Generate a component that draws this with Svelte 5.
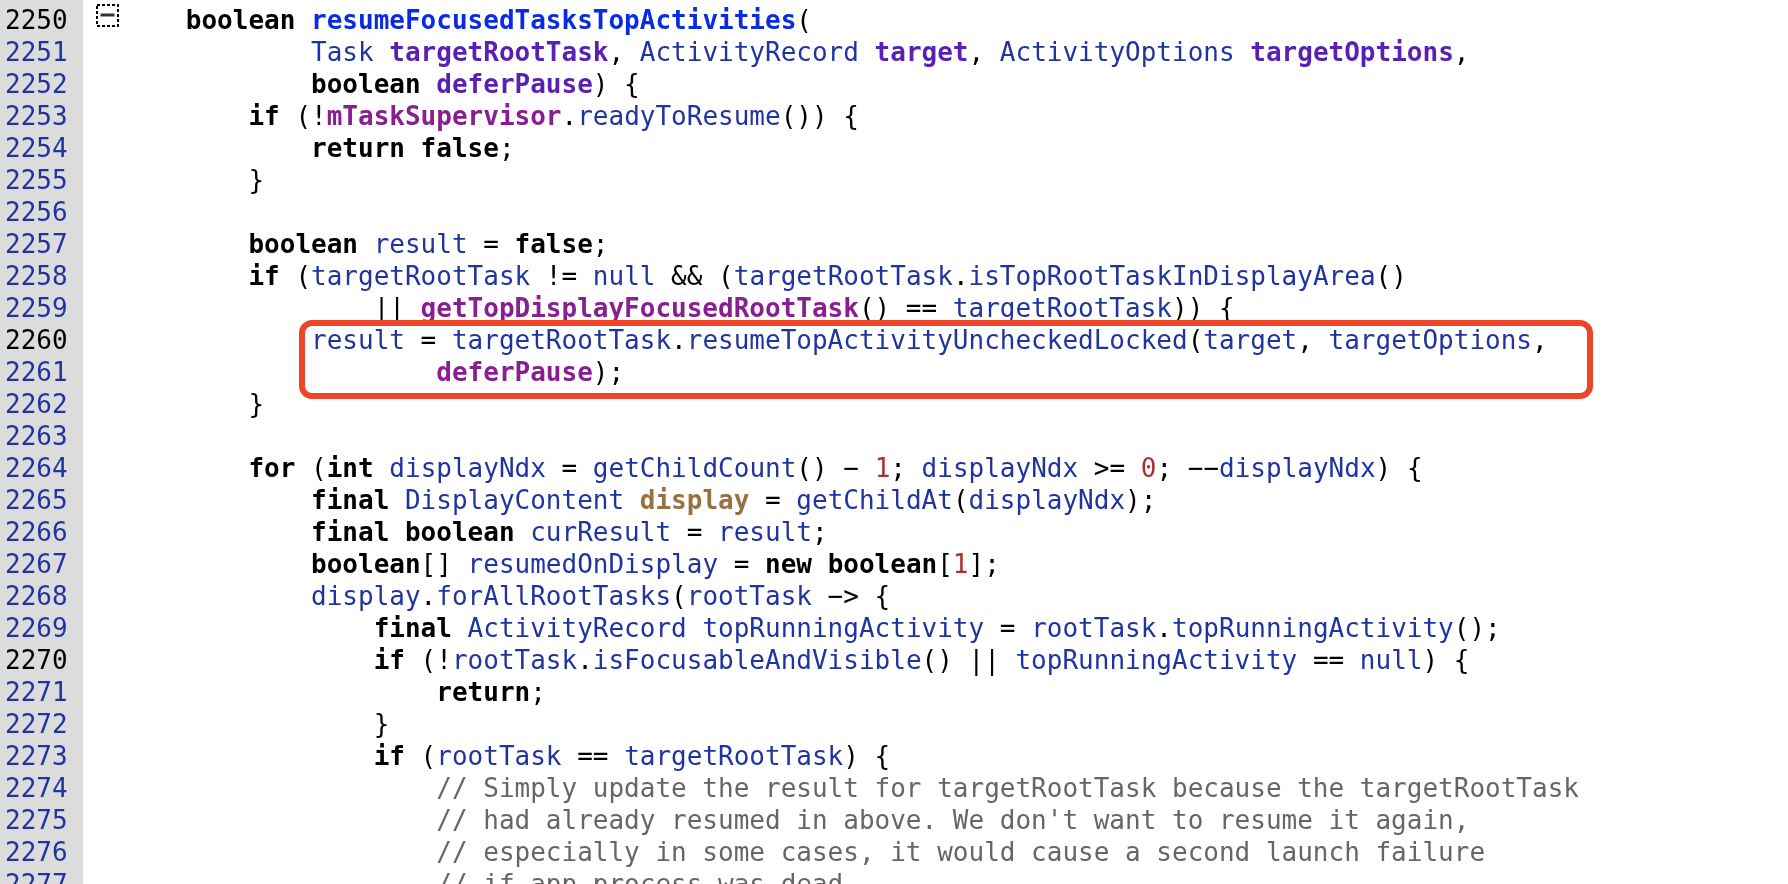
<script lang="ts">
  // each line: line number, indent in chars, then [class, text] pairs
  type Tok = [string, string];
  const k = (t: string): Tok => ['kw', t];
  const v = (t: string): Tok => ['id', t];
  const p = (t: string): Tok => ['', t];
  const a = (t: string): Tok => ['param', t];
  const f = (t: string): Tok => ['field', t];
  const n = (t: string): Tok => ['num', t];
  const c = (t: string): Tok => ['comment', t];

  const lines: { no: number; ind: number; toks: Tok[] }[] = [
    { no: 2250, ind: 4, toks: [k('boolean'), p(' '), ['method', 'resumeFocusedTasksTopActivities'], p('(')] },
    { no: 2251, ind: 12, toks: [v('Task'), p(' '), a('targetRootTask'), p(', '), v('ActivityRecord'), p(' '), a('target'), p(', '), v('ActivityOptions'), p(' '), a('targetOptions'), p(',')] },
    { no: 2252, ind: 12, toks: [k('boolean'), p(' '), a('deferPause'), p(') {')] },
    { no: 2253, ind: 8, toks: [k('if'), p(' (!'), f('mTaskSupervisor'), p('.'), v('readyToResume'), p('()) {')] },
    { no: 2254, ind: 12, toks: [k('return'), p(' '), k('false'), p(';')] },
    { no: 2255, ind: 8, toks: [p('}')] },
    { no: 2256, ind: 0, toks: [] },
    { no: 2257, ind: 8, toks: [k('boolean'), p(' '), v('result'), p(' = '), k('false'), p(';')] },
    { no: 2258, ind: 8, toks: [k('if'), p(' ('), v('targetRootTask'), p(' != '), v('null'), p(' && ('), v('targetRootTask'), p('.'), v('isTopRootTaskInDisplayArea'), p('()')] },
    { no: 2259, ind: 16, toks: [p('|| '), f('getTopDisplayFocusedRootTask'), p('() == '), v('targetRootTask'), p(')) {')] },
    { no: 2260, ind: 12, toks: [v('result'), p(' = '), v('targetRootTask'), p('.'), v('resumeTopActivityUncheckedLocked'), p('('), v('target'), p(', '), v('targetOptions'), p(',')] },
    { no: 2261, ind: 20, toks: [f('deferPause'), p(');')] },
    { no: 2262, ind: 8, toks: [p('}')] },
    { no: 2263, ind: 0, toks: [] },
    { no: 2264, ind: 8, toks: [k('for'), p(' ('), k('int'), p(' '), v('displayNdx'), p(' = '), v('getChildCount'), p('() − '), n('1'), p('; '), v('displayNdx'), p(' >= '), n('0'), p('; −−'), v('displayNdx'), p(') {')] },
    { no: 2265, ind: 12, toks: [k('final'), p(' '), v('DisplayContent'), p(' '), ['local', 'display'], p(' = '), v('getChildAt'), p('('), v('displayNdx'), p(');')] },
    { no: 2266, ind: 12, toks: [k('final'), p(' '), k('boolean'), p(' '), v('curResult'), p(' = '), v('result'), p(';')] },
    { no: 2267, ind: 12, toks: [k('boolean'), p('[] '), v('resumedOnDisplay'), p(' = '), k('new'), p(' '), k('boolean'), p('['), n('1'), p('];')] },
    { no: 2268, ind: 12, toks: [v('display'), p('.'), v('forAllRootTasks'), p('('), v('rootTask'), p(' −> {')] },
    { no: 2269, ind: 16, toks: [k('final'), p(' '), v('ActivityRecord'), p(' '), v('topRunningActivity'), p(' = '), v('rootTask'), p('.'), v('topRunningActivity'), p('();')] },
    { no: 2270, ind: 16, toks: [k('if'), p(' (!'), v('rootTask'), p('.'), v('isFocusableAndVisible'), p('() || '), v('topRunningActivity'), p(' == '), v('null'), p(') {')] },
    { no: 2271, ind: 20, toks: [k('return'), p(';')] },
    { no: 2272, ind: 16, toks: [p('}')] },
    { no: 2273, ind: 16, toks: [k('if'), p(' ('), v('rootTask'), p(' == '), v('targetRootTask'), p(') {')] },
    { no: 2274, ind: 20, toks: [c('// Simply update the result for targetRootTask because the targetRootTask')] },
    { no: 2275, ind: 20, toks: [c("// had already resumed in above. We don't want to resume it again,")] },
    { no: 2276, ind: 20, toks: [c('// especially in some cases, it would cause a second launch failure')] },
    { no: 2277, ind: 20, toks: [c('// if app process was dead')] }
  ];
</script>

<div class="page">
  <div class="listing">
    {#each lines as line}
      <div class="row">
        <span class="no" class:cur={line.no % 10 === 0}>{line.no}</span>
        <span class="mark">
          {#if line.no === 2250}
            <svg width="23" height="23" viewBox="0 0 23 23">
              <rect x="1" y="1" width="21" height="21" fill="none" stroke="#000" stroke-width="2" stroke-dasharray="3 2" />
              <path d="M4.5 11h14" stroke="#333" stroke-width="3" />
            </svg>
          {/if}
        </span>
        <pre class="code">{' '.repeat(line.ind)}{#each line.toks as t}<span class={t[0]}>{t[1]}</span>{/each}</pre>
      </div>
    {/each}
    <div class="callout"></div>
  </div>
</div>

<style>
  :global(body) {
    margin: 0;
    background: #fff;
  }
  .page {
    height: 884px;
    overflow: hidden;
    background: linear-gradient(to right, #dcdcdc 83px, #fff 83px);
  }
  .listing {
    position: relative;
    font-family: "DejaVu Sans Mono", monospace;
    font-size: 26px;
    line-height: 32px;
    color: #000;
    padding-top: 4px;
  }
  .row {
    display: grid;
    grid-template-columns: 83px 40.2px 1fr;
    height: 32px;
    filter: blur(0.35px);
  }
  .no {
    padding-left: 5px;
    color: #2034a0;
  }
  .no.cur {
    color: #000;
  }
  .mark {
    padding-left: 13px;
    line-height: 0;
  }
  .code {
    margin: 0;
    font: inherit;
    white-space: pre;
  }
  .kw {
    font-weight: 700;
  }
  .id {
    color: #2034a0;
  }
  .method {
    color: #0a2be6;
    font-weight: 700;
  }
  .param {
    color: #5a1fb4;
    font-weight: 700;
  }
  .field {
    color: #881e91;
    font-weight: 700;
  }
  .local {
    color: #99703f;
    font-weight: 700;
  }
  .num {
    color: #a83232;
  }
  .comment {
    color: #666;
  }
  .callout {
    position: absolute;
    left: 299px;
    top: 320px;
    width: 1294px;
    height: 79px;
    box-sizing: border-box;
    border: 6px solid #ee4428;
    border-radius: 13px;
  }
</style>
